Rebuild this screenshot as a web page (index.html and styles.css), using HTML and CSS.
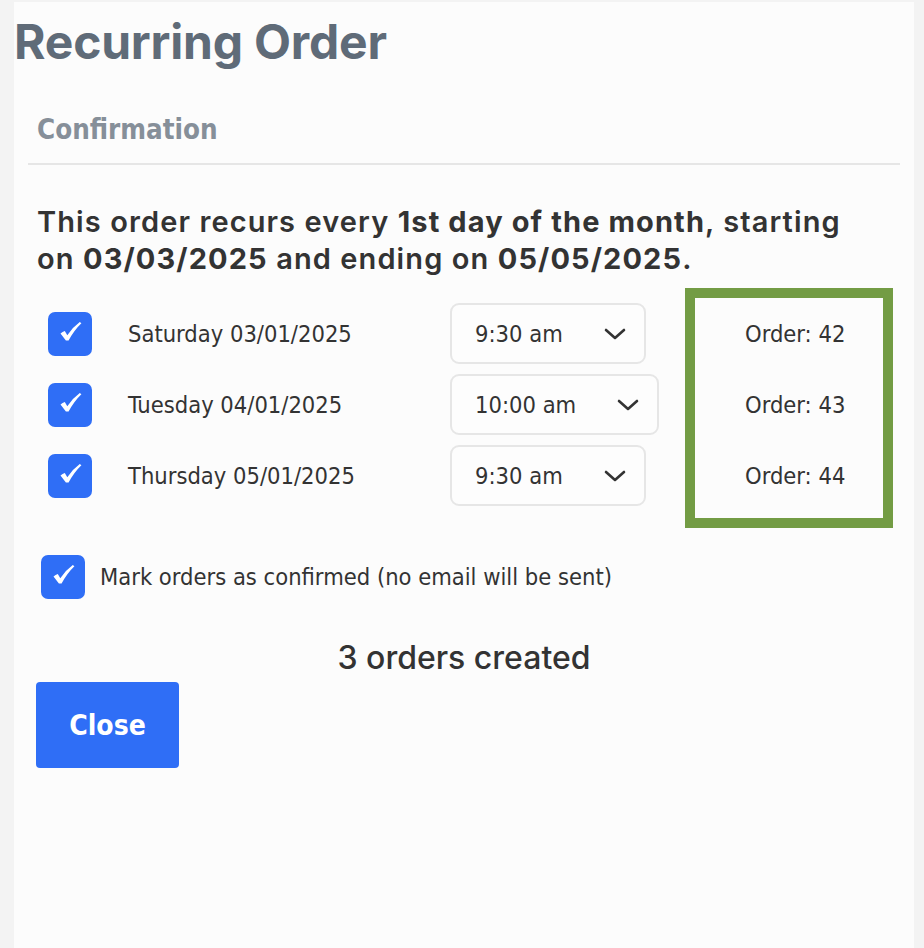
FILE: index.html
```html
<!DOCTYPE html>
<html lang="en">
<head>
<meta charset="utf-8">
<title>Recurring Order</title>
<link rel="stylesheet" href="styles.css">
</head>
<body>
<div class="panel">
  <h1 class="title">Recurring Order</h1>
  <div class="subhead">Confirmation</div>
  <p class="summary">This order recurs every <b>1st day of the month</b>, starting on <b>03/03/2025</b> and ending on <b>05/05/2025</b>.</p>

  <div class="orders">
    <div class="rows">
      <div class="row">
        <span class="check"><svg viewBox="0 0 44 44" width="44" height="44"><path d="M12.5 21.5 Q14.5 19.6 16.8 18.9 L19.3 23.2 Q24.5 15.3 31.8 10 L33.4 11.3 Q25.8 18.6 20.6 28.6 L17.9 28.6 Z" fill="#fff"/></svg></span>
        <span class="date">Saturday 03/01/2025</span>
        <span class="select"><span>9:30 am</span><svg class="chev" viewBox="0 0 22 14" width="22" height="14"><polyline points="2,3 11,11 20,3" fill="none" stroke="#333" stroke-width="2.6" stroke-linecap="round" stroke-linejoin="round"/></svg></span>
      </div>
      <div class="row">
        <span class="check"><svg viewBox="0 0 44 44" width="44" height="44"><path d="M12.5 21.5 Q14.5 19.6 16.8 18.9 L19.3 23.2 Q24.5 15.3 31.8 10 L33.4 11.3 Q25.8 18.6 20.6 28.6 L17.9 28.6 Z" fill="#fff"/></svg></span>
        <span class="date">Tuesday 04/01/2025</span>
        <span class="select"><span>10:00 am</span><svg class="chev" viewBox="0 0 22 14" width="22" height="14"><polyline points="2,3 11,11 20,3" fill="none" stroke="#333" stroke-width="2.6" stroke-linecap="round" stroke-linejoin="round"/></svg></span>
      </div>
      <div class="row">
        <span class="check"><svg viewBox="0 0 44 44" width="44" height="44"><path d="M12.5 21.5 Q14.5 19.6 16.8 18.9 L19.3 23.2 Q24.5 15.3 31.8 10 L33.4 11.3 Q25.8 18.6 20.6 28.6 L17.9 28.6 Z" fill="#fff"/></svg></span>
        <span class="date">Thursday 05/01/2025</span>
        <span class="select"><span>9:30 am</span><svg class="chev" viewBox="0 0 22 14" width="22" height="14"><polyline points="2,3 11,11 20,3" fill="none" stroke="#333" stroke-width="2.6" stroke-linecap="round" stroke-linejoin="round"/></svg></span>
      </div>
    </div>
    <div class="created">
      <div class="order-line">Order: 42</div>
      <div class="order-line">Order: 43</div>
      <div class="order-line">Order: 44</div>
    </div>
  </div>

  <label class="mark">
    <span class="check"><svg viewBox="0 0 44 44" width="44" height="44"><path d="M12.5 21.5 Q14.5 19.6 16.8 18.9 L19.3 23.2 Q24.5 15.3 31.8 10 L33.4 11.3 Q25.8 18.6 20.6 28.6 L17.9 28.6 Z" fill="#fff"/></svg></span>
    <span class="mark-text">Mark orders as confirmed (no email will be sent)</span>
  </label>

  <div class="status">3 orders created</div>

  <div class="actions"><button class="close" type="button">Close</button></div>
</div>
</body>
</html>
```

FILE: styles.css
```css
html, body {
  margin: 0;
  padding: 0;
  background: #f3f3f3;
}

.panel {
  margin: 2px 0 0 14px;
  width: 900px;
  min-height: 946px;
  background: #fcfcfc;
  font-family: "DejaVu Sans Condensed", "DejaVu Sans", sans-serif;
  color: #333;
}

.title {
  margin: 0;
  padding: 11px 0 0 0;
  font: 700 48px/58px Inter, sans-serif;
  color: #5f6b78;
  letter-spacing: -0.2px;
}

.subhead {
  margin: 0 14px 0 14px;
  padding: 42px 9px 17px;
  border-bottom: 2px solid #e6e6e6;
  font: 700 27.5px/1.2 "DejaVu Sans Condensed", "DejaVu Sans", sans-serif;
  color: #868f99;
}

.summary {
  margin: 0;
  padding: 38px 58px 0 23px;
  font: 600 29px/37px Inter, sans-serif;
  letter-spacing: 1.1px;
  color: #333;
}

.summary b {
  font-weight: 700;
}

.orders {
  display: flex;
  align-items: flex-start;
  margin-top: 11px;
  padding-left: 34px;
}

.rows {
  width: 637px;
  padding-top: 10px;
}

.row {
  display: flex;
  align-items: center;
  height: 71px;
}

.check {
  display: inline-flex;
  width: 44px;
  height: 44px;
  border-radius: 7px;
  background: #2f6ef6;
  flex: none;
}

.date {
  width: 322px;
  margin-left: 36px;
  font-size: 23.5px;
  color: #333;
}

.select {
  display: inline-flex;
  align-items: center;
  gap: 41px;
  height: 61px;
  box-sizing: border-box;
  padding: 0 18px 0 23px;
  border: 2px solid #e6e6e6;
  border-radius: 9px;
  background: #fdfdfd;
  font-size: 23.5px;
}

.chev {
  display: block;
}

.created {
  width: 188px;
  border: 10px solid #739c44;
  padding-bottom: 7px;
}

.order-line {
  height: 71px;
  display: flex;
  align-items: center;
  padding-left: 50px;
  font-size: 23.5px;
}

.mark {
  display: flex;
  align-items: center;
  gap: 15px;
  margin: 27px 0 0 27px;
}

.mark-text {
  font-size: 23.5px;
}

.status {
  margin-top: 39px;
  text-align: center;
  font: 500 32px/40px Inter, sans-serif;
  color: #333;
}

.actions {
  padding: 4px 0 0 22px;
}

.close {
  width: 143px;
  height: 86px;
  border: none;
  border-radius: 4px;
  background: #2f6ef6;
  color: #fff;
  font: 700 28px "DejaVu Sans Condensed", "DejaVu Sans", sans-serif;
  cursor: pointer;
}
```
